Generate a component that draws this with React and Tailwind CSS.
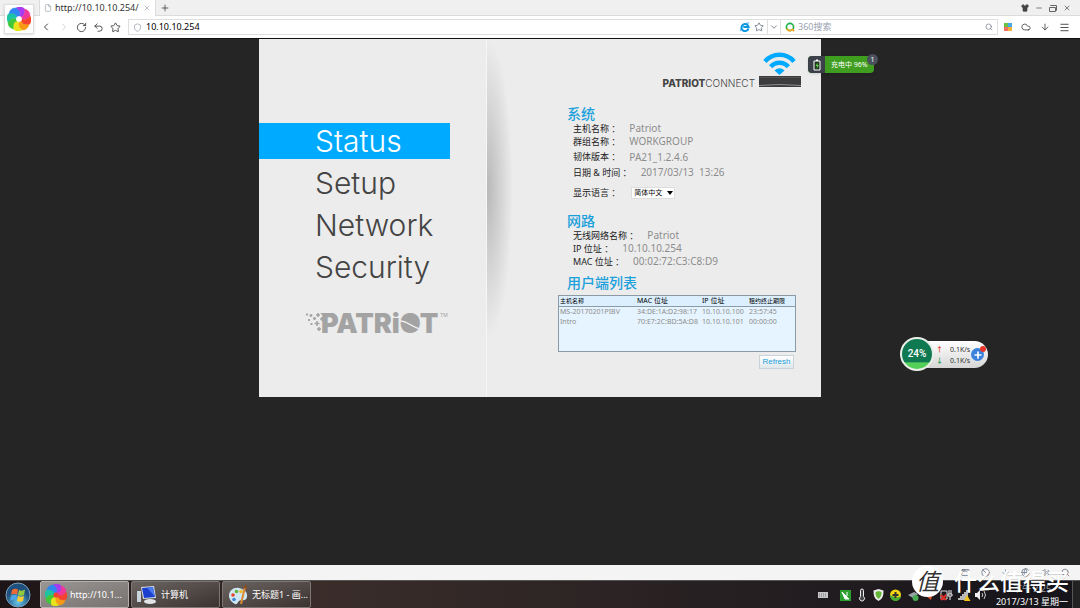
import {
    ChevronLeft,
    ChevronRight,
    ChevronDown,
    RotateCw,
    Undo2,
    Star,
    Plus,
    X,
    Minus,
    File,
    Shield,
    Shirt,
    Search,
    Cloud,
    ArrowDown,
    Menu,
    AppWindow,
    Ban,
    Globe,
    Volume2,
} from "lucide-react";

const menuItems = ["Status", "Setup", "Network", "Security"];

const clients = [
    { name: "MS-20170201PIBV", mac: "34:DE:1A:D2:98:17", ip: "10.10.10.100", lease: "23:57:45" },
    { name: "Intro", mac: "70:E7:2C:BD:5A:D8", ip: "10.10.10.101", lease: "00:00:00" },
];

const petals = ["#a63bf0", "#f0389b", "#f5432f", "#f99a15", "#e9e21c", "#3fc93a", "#1cc4a4", "#2f86f0"];

function PinwheelLogo({ className, center = "#fff" }) {
    return (
        <svg viewBox="0 0 24 24" className={className} aria-hidden="true">
            {petals.map((color, i) => (
                <path
                    key={color}
                    d="M12 9Q14.500 5 9 1A7 7 0 0 1 17.700 2.100Q18.700 8.800 14.100 9.900Z"
                    fill={color}
                    stroke={color}
                    strokeWidth="0.500"
                    transform={`rotate(${i * 45} 12 12)`}
                />
            ))}
            <circle cx="12" cy="12" r="2.800" fill={center} />
        </svg>
    );
}

function IconButton({ label, children }) {
    return (
        <button type="button" aria-label={label} className="flex items-center justify-center text-[#444]">
            {children}
        </button>
    );
}

function BrowserHeader() {
    return (
        <header className="relative shrink-0">
            {/* Tab strip */}
            <div className="flex h-4 items-center border-b border-[#dcdcdc] bg-[#f0f0f0] pl-[39px] pr-[9px]">
                <div className="flex h-4 w-[117px] items-center gap-[3px] border-x border-[#dcdcdc] bg-white px-1">
                    <File className="size-2 shrink-0 text-gray-400" />
                    <span className="flex-1 text-[9px] leading-4 text-[#333]">http://10.10.10.254/</span>
                    <IconButton label="Close tab">
                        <X className="size-2 text-gray-400" />
                    </IconButton>
                </div>
                <div className="ml-1 flex-1">
                    <IconButton label="New tab">
                        <Plus className="size-2.5" />
                    </IconButton>
                </div>
                <div className="flex gap-1.5">
                    <IconButton label="Skins">
                        <Shirt className="size-2" fill="currentColor" />
                    </IconButton>
                    <IconButton label="Minimize">
                        <Minus className="size-2" />
                    </IconButton>
                    <IconButton label="Restore">
                        <svg viewBox="0 0 8 8" className="size-2 text-[#666]" fill="none" stroke="currentColor">
                            <path d="M1.500 2V1.500h6v5H6.500" />
                            <path d="M.5 3.500h6v4h-6z" />
                        </svg>
                    </IconButton>
                    <IconButton label="Close">
                        <X className="size-2" />
                    </IconButton>
                </div>
            </div>

            {/* Address bar */}
            <div className="flex h-[22px] items-center bg-white pl-10 pr-2.5">
                <div className="flex w-[88px] items-center gap-1.5">
                    <IconButton label="Back">
                        <ChevronLeft className="size-3" />
                    </IconButton>
                    <IconButton label="Forward">
                        <ChevronRight className="size-3 text-gray-300" />
                    </IconButton>
                    <IconButton label="Reload">
                        <RotateCw className="size-[11px]" />
                    </IconButton>
                    <IconButton label="Undo">
                        <Undo2 className="size-[11px]" />
                    </IconButton>
                    <IconButton label="Favourite">
                        <Star className="size-[11px]" />
                    </IconButton>
                </div>
                <div className="flex h-4 flex-1 items-center border border-[#dedede] pl-1 pr-[3px]">
                    <Shield className="size-[9px] text-gray-400" />
                    <input
                        aria-label="Address"
                        defaultValue="10.10.10.254"
                        className="ml-1 min-w-0 flex-1 text-[9px] leading-4 text-black outline-none"
                    />
                    <svg viewBox="0 0 12 12" className="size-2.5" aria-hidden="true">
                        <path d="M10.200 7.800 A4.300 4.300 0 1 1 10.300 5.900 H4" fill="none" stroke="#0a96e0" strokeWidth="2.300" />
                        <path d="M1 11 C0 7 5 1 11 1" fill="none" stroke="#0a96e0" />
                    </svg>
                    <Star className="ml-1 size-2.5 text-gray-500" />
                </div>
                <div className="flex h-4 w-3 items-center justify-center border-y border-[#dedede]">
                    <ChevronDown className="size-2.5 text-gray-500" />
                </div>
                <div className="flex h-4 w-[218px] items-center border border-[#dedede] px-1">
                    <svg viewBox="0 0 12 12" className="size-2.5" aria-hidden="true">
                        <circle cx="6" cy="6" r="4.300" fill="none" stroke="#1fb04c" strokeWidth="2" />
                        <path d="M2 8 A4.300 4.300 0 0 0 9 9 L11 11" fill="none" stroke="#f5a81c" strokeWidth="2" />
                    </svg>
                    <input
                        aria-label="Search"
                        placeholder="360搜索"
                        className="ml-[3px] min-w-0 flex-1 text-[9px] leading-4 outline-none placeholder:text-gray-400"
                    />
                    <Search className="size-2 text-gray-500" />
                </div>
                <div className="ml-1.5 flex items-center gap-[9px]">
                    <IconButton label="Apps">
                        <span className="grid size-2 grid-cols-2">
                            <span className="size-1 bg-[#6cc243]" />
                            <span className="size-1 bg-[#4aa8ea]" />
                            <span className="size-1 bg-[#f36f62]" />
                            <span className="size-1 bg-[#f6b13c]" />
                        </span>
                    </IconButton>
                    <IconButton label="Cloud">
                        <Cloud className="size-2.5" />
                    </IconButton>
                    <IconButton label="Downloads">
                        <ArrowDown className="size-2.5" />
                    </IconButton>
                    <IconButton label="Menu">
                        <Menu className="size-[11px]" />
                    </IconButton>
                </div>
            </div>

            {/* Browser logo sits over both bars */}
            <div className="absolute left-1 top-1 flex size-[30px] items-center justify-center border border-[#dedede] bg-white shadow-sm">
                <PinwheelLogo className="size-6" />
            </div>
        </header>
    );
}

function PatriotLogo() {
    return (
        <svg viewBox="0 0 144 24" className="h-6 w-36 overflow-visible" role="img" aria-label="Patriot">
            <path
                d="M1 2.500h2M2 1.500v2M6 2v3M4.500 3.500h3M4 7v2M3 8h2M9.500 5v3M8 6.500h3M13 1v4M11 3h4M12 9v5M9.500 11.500h5M6.500 11v2M5.500 12h2M17 5v4M15 7h4M14 15v4M12 17h4"
                stroke="#a3a3a3"
                strokeWidth="1.500"
                fill="none"
            />
            <path d="M15 1h14v4H20z" fill="#a3a3a3" />
            <text x="16" y="21" fontSize="27" fontWeight="900" fill="#a3a3a3">
                PATRiOT
            </text>
            <ellipse cx="105" cy="11.500" rx="6" ry="7" fill="#a3a3a3" />
            <path d="M95 9c7 0 10 5 20 8" stroke="#ececec" strokeWidth="1.500" fill="none" />
            <text x="135" y="5" fontSize="5" fill="#a3a3a3">
                TM
            </text>
        </svg>
    );
}

function Sidebar() {
    return (
        <aside className="w-[228px] shrink-0 border-r border-[#f6f6f6] pt-[84px]">
            <nav className="flex flex-col items-start gap-1.5 text-[30px] font-light leading-9">
                {menuItems.map((item, i) => (
                    <a
                        key={item}
                        href={`#${item.toLowerCase()}`}
                        className={
                            i === 0
                                ? "w-[191px] bg-[#00aaff] pl-14 font-[Inter,sans-serif] text-white"
                                : "w-[191px] pl-14 font-[Inter,sans-serif] text-[#444]"
                        }
                    >
                        {item}
                    </a>
                ))}
            </nav>
            <div className="ml-[46px] mt-[27px] font-[Inter,sans-serif]">
                <PatriotLogo />
            </div>
        </aside>
    );
}

function Field({ label, value, className = "h-[13px]" }) {
    return (
        <div className={`flex items-center gap-[9px] ${className}`}>
            <dt className="text-[9px] text-[#222]">{label} ：</dt>
            <dd className="text-[10px] whitespace-pre text-[#8c8c8c]">{value}</dd>
        </div>
    );
}

function SectionTitle({ children }) {
    return <h2 className="text-sm font-medium leading-4 text-[#1ba0dc]">{children}</h2>;
}

function ClientTable() {
    return (
        <div className="min-h-[57px] border border-[#8b9aa5] bg-[#e6f4ff]">
            <table className="w-full table-fixed text-left text-[7px] leading-[10px]">
                <thead>
                    <tr className="border-b border-[#8b9aa5] bg-[#dcefff] text-black">
                        <th className="w-[78px] pl-px text-[6px] font-normal">主机名称</th>
                        <th className="w-[65px] font-normal">MAC 位址</th>
                        <th className="w-[47px] font-normal">IP 位址</th>
                        <th className="text-[6px] font-normal">租约终止期限</th>
                    </tr>
                </thead>
                <tbody className="text-[#8c8c8c]">
                    {clients.map((client) => (
                        <tr key={client.mac}>
                            <td className="pl-px">{client.name}</td>
                            <td>{client.mac}</td>
                            <td>{client.ip}</td>
                            <td>{client.lease}</td>
                        </tr>
                    ))}
                </tbody>
            </table>
        </div>
    );
}

function StatusPanel() {
    return (
        <section className="flex-1 bg-[radial-gradient(ellipse_26px_150px_at_0_42%,#b8b8b8,transparent)] pb-7 pl-[71px] pr-[25px]">
            <div className="-mr-1.5 flex items-end justify-end gap-[3px] pt-3">
                <p className="font-[Inter,sans-serif] text-[10px] leading-[10px] text-[#444]">
                    <b className="font-extrabold">PATRIOT</b>
                    <span className="font-light">CONNECT</span>
                </p>
                <svg viewBox="0 0 44 37" className="h-[37px] w-11" aria-hidden="true">
                    <g fill="none" stroke="#00aaff" strokeWidth="4.500">
                        <path d="M7 10.500A19 19 0 0 1 36 10.500" />
                        <path d="M12.700 15.800A11.500 11.500 0 0 1 30.300 15.800" />
                    </g>
                    <path d="M16.500 19.500q5 -4.500 10 0L21.500 24z" fill="#00aaff" />
                    <path d="M1 25h42v11H1z" fill="#3c3c3e" />
                    <path d="M1 34.500q21 -2 42 0" stroke="#8d8d8d" fill="none" />
                    <path d="M1 26.500h42" stroke="#555" />
                </svg>
            </div>

            <div className="mt-[18px] pl-[9px]">
                <SectionTitle>系统</SectionTitle>
                <dl className="pl-1.5">
                    <Field label="主机名称" value="Patriot" />
                    <Field label="群组名称" value="WORKGROUP" />
                    <Field label="韧体版本" value="PA21_1.2.4.6" className="mt-px h-4" />
                    <Field label="日期 & 时间" value="2017/03/13  13:26" className="h-[15px]" />
                </dl>
                <div className="mt-[5px] flex h-4 items-center gap-[11px] pl-1.5">
                    <label htmlFor="language" className="text-[9px] text-[#222]">
                        显示语言 ：
                    </label>
                    <div className="relative">
                        <select
                            id="language"
                            className="block h-3 w-11 appearance-none border border-[#ddd] bg-white pl-0.5 text-[7px] leading-[10px] text-black"
                        >
                            <option>简体中文</option>
                        </select>
                        <span className="pointer-events-none absolute right-0.5 top-1 border-x-[3px] border-t-4 border-x-transparent border-t-black" />
                    </div>
                </div>
            </div>

            <div className="mt-3 pl-[9px]">
                <SectionTitle>网路</SectionTitle>
                <dl className="pl-1.5">
                    <Field label="无线网络名称" value="Patriot" />
                    <Field label="IP 位址" value="10.10.10.254" />
                    <Field label="MAC 位址" value="00:02:72:C3:C8:D9" />
                </dl>
            </div>

            <div className="mb-1 mt-[7px] pl-[9px]">
                <SectionTitle>用户端列表</SectionTitle>
            </div>
            <ClientTable />
            <div className="mt-[3px] flex justify-end">
                <button
                    type="button"
                    className="mr-0.5 h-3.5 w-[35px] border border-[#c9d3d8] bg-linear-to-b from-white to-[#dfe7eb] font-['Liberation_Sans',sans-serif] text-[8px] text-[#1ba0dc]"
                >
                    Refresh
                </button>
            </div>
        </section>
    );
}

function BatteryWidget() {
    return (
        <div className="absolute right-[206px] top-14 flex h-[17px] w-[66px] rounded bg-[#3f9e1f] text-white shadow">
            <div className="flex w-[17px] items-center justify-center rounded-l bg-[#3b4049]">
                <svg viewBox="0 0 8 12" className="h-3 w-2" aria-hidden="true">
                    <path d="M3 .5h2v1.500H3z" fill="#fff" />
                    <path d="M1 2h6v9H1z" fill="#20331f" stroke="#fff" />
                    <path d="M4.500 3.500 2.500 7H4l-.5 3L6 6H4.500z" fill="#55d93b" />
                </svg>
            </div>
            <span className="flex-1 whitespace-nowrap pl-1.5 text-[7px] leading-[17px]">充电中 96%</span>
            <span className="absolute -right-1 -top-0.5 size-[11px] rounded-full bg-[#4a505c] text-center text-[7px] leading-[11px]">
                1
            </span>
        </div>
    );
}

function SpeedWidget() {
    return (
        <div className="absolute right-[92px] top-[341px] flex h-[27px] w-[84px] items-center rounded-full bg-linear-to-b from-white to-[#d6d6d6] pl-8 text-[7px] text-[#333]">
            <div className="absolute -left-1 -top-1 size-[34px] rounded-full border-2 border-[#e8efe9] bg-linear-to-b from-[#0f7a52] from-75% to-[#54cf57] to-80% text-center font-[Roboto,sans-serif] text-[10px] font-medium leading-[29px] text-white">
                24%
            </div>
            <div className="leading-[11px]">
                <p className="flex gap-2.5">
                    <span className="w-1 font-bold text-[#e2402a]">↑</span>0.1K/s
                </p>
                <p className="flex gap-2.5">
                    <span className="w-1 font-bold text-[#22a550]">↓</span>0.1K/s
                </p>
            </div>
            <button
                type="button"
                aria-label="Boost"
                className="absolute right-1 top-[7px] flex size-[13px] items-center justify-center rounded-full bg-[#3b80dc] text-white"
            >
                <Plus className="size-2.5" strokeWidth={4} />
                <span className="absolute -right-0.5 -top-0.5 size-1.5 rounded-full bg-[#e6352b]" />
            </button>
        </div>
    );
}

function TaskButton({ label, active, children }) {
    return (
        <button
            type="button"
            className={
                active
                    ? "flex h-[27px] w-[89px] items-center gap-[3px] rounded-xs border border-[#b5b0b0] bg-linear-to-br from-[#9a9693] to-[#777270] pl-1 text-[9px] text-white"
                    : "flex h-[27px] w-[89px] items-center gap-[3px] rounded-xs border border-[#7c7674] bg-linear-to-br from-[#6b6562] to-[#3b3331] pl-1 text-[9px] text-white"
            }
        >
            {children}
            <span className="whitespace-nowrap">{label}</span>
        </button>
    );
}

function TrayIcons() {
    return (
        <svg viewBox="0 0 172 16" className="mr-1.5 h-4 w-[172px]" aria-hidden="true">
            {/* keyboard */}
            <path d="M1 5h10v6H1z" fill="#c8c8c8" />
            <path d="M2 7h8M2 9h8" stroke="#777" strokeDasharray="1 1" />
            {/* graphics driver */}
            <path d="M23 3h11v11H23z" fill="#2ba02f" />
            <path d="M25 5l7 7h-4zM30 5v4" fill="#fff" stroke="#fff" />
            {/* thermometer */}
            <path d="M43.500 3.500a1.500 1.500 0 0 1 3 0v6a2.500 2.500 0 1 1-3 0z" fill="#444" stroke="#eee" />
            {/* shield */}
            <path d="M56.500 3.500 61.500 2l5 1.500c0 6-1 8-5 10.500-4-2.500-5-4.500-5-10.500z" fill="#eee" />
            <path d="M58.500 5 61.500 4l3 1c0 4-1 5-3 7-2-2-3-3-3-7z" fill="#62b836" />
            {/* antivirus */}
            <circle cx="78.500" cy="8" r="5.500" fill="#f6d713" />
            <path d="M73 8a5.500 5.500 0 0 0 11 1c-3 2-6 2-11-1z" fill="#46ad32" />
            <path d="M78.500 5v6M75.500 8h6" stroke="#333" strokeWidth="2" />
            {/* usb */}
            <path d="M91 8l6-3 4 2-5 4z" fill="#9aa2a8" />
            <circle cx="98.500" cy="11" r="3" fill="#46ad52" />
            <path d="M109 9l7-4-2 8z" fill="#d9542e" />
            {/* power */}
            <path d="M124 4h6v8h-6z" fill="none" stroke="#ddd" />
            <path d="M132 3v4m2-4v4m-3 0h4v2h-4zm2 2v4" stroke="#eee" fill="none" />
            <path d="M124 8l5 5m0-5-5 5" stroke="#e12a24" strokeWidth="2" />
            {/* network */}
            <path d="M142 13v-2m2 2V9m2 4V7m2 6V5m2 8V3" stroke="#eee" strokeWidth="1.500" />
            <path d="M147 14l3-6 3.500 6z" fill="#f2c21b" />
            {/* volume */}
            <path d="M158 6h2l3-3v10l-3-3h-2z" fill="#eee" />
            <path d="M165 6q1.500 2 0 4m2-6q3 4 0 8" stroke="#ccc" fill="none" />
        </svg>
    );
}

function Taskbar() {
    return (
        <footer className="flex h-[27px] shrink-0 items-center bg-linear-to-r from-[#1c1416] via-[#3a2d2a] via-30% to-[#15141a] pl-[5px] text-white">
            <button type="button" aria-label="Start" className="mr-[9px]">
                <svg viewBox="0 0 26 26" className="size-[26px]">
                    <defs>
                        <radialGradient id="orb" cy="0.800">
                            <stop offset="0" stopColor="#69c8ee" />
                            <stop offset="1" stopColor="#1f4f7c" />
                        </radialGradient>
                    </defs>
                    <circle cx="13" cy="13" r="12" fill="url(#orb)" stroke="#7fa3bd" />
                    <path d="M7 8q3-2 6-.5l-1 5q-3-1.500-6 .5z" fill="#ef6a32" />
                    <path d="M14 8q3 1.500 6-.5l-1 5.500q-3 1.500-6 0z" fill="#93c83e" />
                    <path d="M6 14q3-2 6-.5l-1 5q-3-1.500-6 .5z" fill="#4ba6e3" />
                    <path d="M13 14q3 1.500 6 0l-1 5q-3 1.500-6 0z" fill="#fccb34" />
                </svg>
            </button>
            <div className="flex gap-0.5">
                <TaskButton label="http://10.1..." active>
                    <PinwheelLogo className="size-[22px] shrink-0" center="#f5432f" />
                </TaskButton>
                <TaskButton label="计算机">
                    <svg viewBox="0 0 22 20" className="h-5 w-[22px] shrink-0" aria-hidden="true">
                        <path d="M1 6h4v11H1z" fill="#c9d3db" />
                        <path d="M5 2l13-1 2 12-13 1z" fill="#d6dde3" />
                        <path d="M6 3l11-1 2 10-11 1z" fill="#1d3fd0" />
                        <path d="M11 2.500l6-.5 2 10z" fill="#4a7af0" />
                        <ellipse cx="14" cy="16.500" rx="6" ry="2.500" fill="#e1e5e8" />
                    </svg>
                </TaskButton>
                <TaskButton label="无标题1 - 画...">
                    <svg viewBox="0 0 22 22" className="size-[22px] shrink-0" aria-hidden="true">
                        <path d="M2 12C2 6 7 3 12 4s9 4 8 9-6 2-8 4-2 4-4 3-6-4-6-8z" fill="#cfe6f3" />
                        <circle cx="6" cy="11" r="1.800" fill="#e8442d" />
                        <circle cx="9.500" cy="7.500" r="1.800" fill="#61b23b" />
                        <circle cx="14" cy="7.500" r="1.800" fill="#f3bd2a" />
                        <circle cx="7" cy="15.500" r="1.800" fill="#3b87d6" />
                        <path d="M18 3 14 20" stroke="#d98a35" strokeWidth="2" />
                        <path d="M16.500 4 19 0l1.500 5z" fill="#8a4b22" />
                    </svg>
                </TaskButton>
            </div>
            <div className="ml-auto flex items-center">
                <TrayIcons />
                <time className="w-[74px] text-center text-[9px] leading-[13px]">
                    <span className="block text-gray-400">下午 2:25</span>
                    <span className="block whitespace-nowrap">2017/3/13 星期一</span>
                </time>
                <span className="ml-[3px] h-[27px] w-2 border-l border-[#555] bg-[#222]" />
            </div>
        </footer>
    );
}

function Watermark() {
    return (
        <div className="pointer-events-none absolute bottom-[11px] right-[11px] flex items-center gap-[11px] text-white">
            <span className="flex size-[31px] items-center justify-center rounded-full bg-white text-[23px] italic leading-none text-[#333]">
                值
            </span>
            <span className="whitespace-nowrap text-[23px] font-medium leading-8 text-shadow-2xs">什么值得买</span>
        </div>
    );
}

function App() {
    return (
        <div className="relative flex h-screen flex-col overflow-hidden bg-[#252525] font-['Noto_Sans','Noto_Sans_CJK_SC',sans-serif]">
            <BrowserHeader />
            <main className="flex-1 border-t border-[#111]">
                <div className="mx-auto flex max-w-[562px] bg-[#ececec]">
                    <Sidebar />
                    <StatusPanel />
                </div>
            </main>

            {/* Browser status bar */}
            <div className="flex h-4 shrink-0 items-center justify-end gap-[11px] border-b border-[#555] bg-[#f4f4f4] pr-2.5 text-gray-500">
                <AppWindow className="size-[9px]" />
                <Ban className="size-[9px]" />
                <ArrowDown className="size-[9px]" />
                <Globe className="size-[9px]" />
                <Volume2 className="size-[9px]" />
                <Search className="size-[9px]" />
            </div>
            <Taskbar />

            <BatteryWidget />
            <SpeedWidget />
            <Watermark />
        </div>
    );
}

export default App;
